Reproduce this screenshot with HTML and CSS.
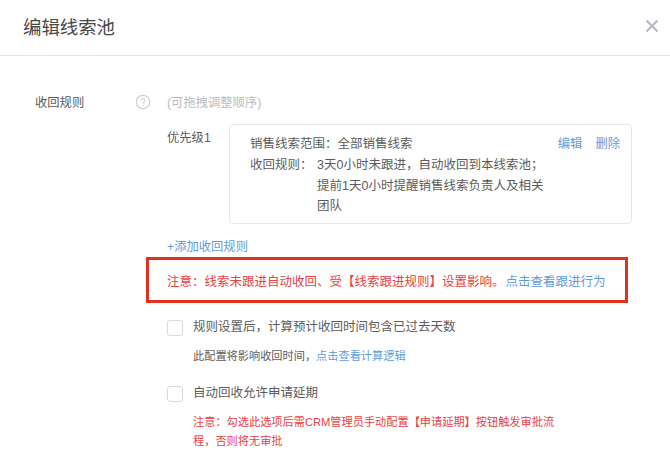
FILE: index.html
```html
<!DOCTYPE html>
<html lang="zh-CN">
<head>
<meta charset="utf-8">
<title>编辑线索池</title>
<link rel="stylesheet" href="styles.css">
</head>
<body>
<header class="head">
  <h1 class="title">编辑线索池</h1>
  <svg class="close" viewBox="0 0 14 14" width="14" height="14" aria-label="关闭"><path d="M1.5 1.5 12.5 12.5M12.5 1.5 1.5 12.5" fill="none" stroke="#b4bac6" stroke-width="2.2"/></svg>
</header>
<main class="form">
  <div class="label-col">
    <span class="label">收回规则</span>
    <svg class="help" viewBox="0 0 16 16" width="16" height="16"><circle cx="8" cy="8" r="6.7" fill="none" stroke="#cfcfcf" stroke-width="1.2"/><path d="M6.2 6.4a1.9 1.9 0 1 1 2.9 1.6c-.7.4-1.1.8-1.1 1.6" fill="none" stroke="#cfcfcf" stroke-width="1.1"/><circle cx="8" cy="11.4" r=".7" fill="#cfcfcf"/></svg>
  </div>
  <div class="content">
    <div class="hint">(可拖拽调整顺序)</div>
    <div class="rule">
      <span class="priority">优先级1</span>
      <div class="card">
        <div class="card-text">
          <div class="row"><span class="key">销售线索范围：</span><span>全部销售线索</span></div>
          <div class="row"><span class="key key-narrow">收回规则：</span><span class="val">3天0小时未跟进，自动收回到本线索池；<br>提前1天0小时提醒销售线索负责人及相关团队</span></div>
        </div>
        <div class="actions"><a class="link">编辑</a><a class="link">删除</a></div>
      </div>
    </div>
    <a class="link add">+添加收回规则</a>
    <div class="alert">
      <span class="red">注意：线索未跟进自动收回、受【线索跟进规则】设置影响。</span><a class="link alert-link">点击查看跟进行为</a>
    </div>
    <div class="option">
      <span class="check"></span>
      <div class="opt-body">
        <div class="opt-title">规则设置后，计算预计收回时间包含已过去天数</div>
        <div class="opt-note">此配置将影响收回时间，<a class="link">点击查看计算逻辑</a></div>
      </div>
    </div>
    <div class="option second">
      <span class="check"></span>
      <div class="opt-body">
        <div class="opt-title">自动回收允许申请延期</div>
        <div class="opt-warn">注意：勾选此选项后需CRM管理员手动配置【申请延期】按钮触发审批流程，否则将无审批</div>
      </div>
    </div>
  </div>
</main>
</body>
</html>
```
FILE: styles.css
```css
* { box-sizing: border-box; }
html, body { margin: 0; height: 459px; overflow: hidden; }
body {
  background: #fff;
  color: #5c5c5c;
  font-family: "Liberation Sans", "Noto Sans CJK SC", sans-serif;
  font-size: 12.5px;
}
.head {
  height: 56px;
  border-bottom: 1px solid #e4e4e4;
  padding: 0 11px 0 23px;
  display: flex;
  align-items: center;
  justify-content: space-between;
}
.title { margin: 0 0 3px; font-size: 18.4px; font-weight: 400; color: #484848; }
.close { margin-bottom: 3px; }
.form { display: flex; padding: 37px 0 0 35px; }
.label-col { width: 132px; display: flex; justify-content: space-between; padding-right: 16px; align-items: flex-start; height: 20px; }
.label { line-height: 20px; font-size: 12.3px; }
.help { margin-top: 1px; }
.content { width: 465px; }
.hint { line-height: 20px; color: #bbb; font-size: 12.3px; }
.rule { display: flex; margin-top: 11px; }
.priority { width: 62px; font-size: 12.3px; line-height: 16px; margin-top: 6px; }
.card {
  width: 403px;
  height: 100px;
  border: 1px solid #e8e8e8;
  border-radius: 4px;
  padding: 9px 11px 0 21px;
  display: flex;
  justify-content: space-between;
}
.card-text { line-height: 20.8px; margin-left: -1px; }
.row { display: flex; }
.key { white-space: nowrap; }
.key-narrow { width: 67px; }
.val { width: 232px; }
.actions { display: flex; gap: 13px; line-height: 20.8px; font-size: 12.3px; }
.link { color: #5f9bdc; }
.add { display: block; margin-top: 13px; line-height: 20px; font-size: 12.3px; }
.alert {
  width: 482px;
  height: 46px;
  margin: 0 0 0 -21px;
  padding: 0 0 0 18px;
  border: 3px solid #e2321f;
  display: flex;
  align-items: center;
  white-space: nowrap;
}
.red { color: #e8413f; }
.alert-link { margin-left: 1px; }
.option { display: flex; margin-top: 16px; }
.second { margin-top: 21px; }
.check {
  width: 16px;
  height: 16px;
  flex: none;
  border: 1px solid #d9d9d9;
  border-radius: 3px;
  margin-top: 1px;
}
.opt-body { margin-left: 10px; }
.opt-title { line-height: 17px; }
.opt-note { margin-top: 12px; font-size: 11.2px; line-height: 16px; }
.opt-warn { margin-top: 11px; width: 365px; font-size: 11.2px; line-height: 19px; color: #e8413f; }
```
